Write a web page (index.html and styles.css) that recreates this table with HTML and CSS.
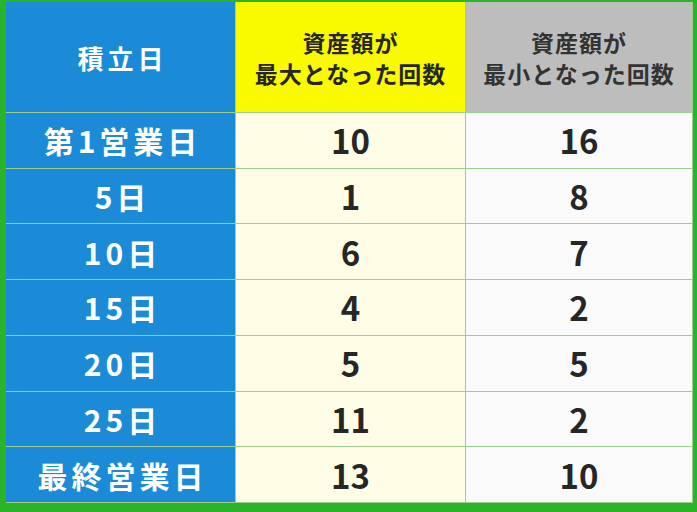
FILE: index.html
```html
<!DOCTYPE html>
<html lang="ja">
<head>
<meta charset="utf-8">
<link rel="stylesheet" href="styles.css">
</head>
<body>
<div class="frame">
  <div class="table">
    <div class="cell head label">積立日</div>
    <div class="cell head max"><span class="line">資産額が</span><span class="line">最大となった回数</span></div>
    <div class="cell head min"><span class="line">資産額が</span><span class="line">最小となった回数</span></div>

    <div class="cell label">第1営業日</div><div class="cell num max">10</div><div class="cell num min">16</div>
    <div class="cell label">5日</div><div class="cell num max">1</div><div class="cell num min">8</div>
    <div class="cell label">10日</div><div class="cell num max">6</div><div class="cell num min">7</div>
    <div class="cell label">15日</div><div class="cell num max">4</div><div class="cell num min">2</div>
    <div class="cell label">20日</div><div class="cell num max">5</div><div class="cell num min">5</div>
    <div class="cell label">25日</div><div class="cell num max">11</div><div class="cell num min">2</div>
    <div class="cell label">最終営業日</div><div class="cell num max">13</div><div class="cell num min">10</div>
  </div>
</div>
</body>
</html>
```

FILE: styles.css
```css
* { box-sizing: border-box; }
html, body { margin: 0; padding: 0; }
body {
  width: 697px;
  height: 512px;
  background: #2bb32a;
  font-family: "Noto Sans CJK JP", "Noto Sans", sans-serif;
  overflow: hidden;
}
.frame {
  padding: 2px 4px 9px 6px;
}
.table {
  display: grid;
  grid-template-columns: 229px 229px 1fr;
  grid-template-rows: 110px repeat(7, 1fr);
  gap: 1px;
  height: 501px;
  background: #9ccf8e;
  border-bottom: 1px solid #9ccf8e;
  border-right: 1px solid #9ccf8e;
}
.cell {
  display: flex;
  align-items: center;
  justify-content: center;
  text-align: center;
  font-weight: 700;
}
.label {
  background: #1b8bd8;
  color: #ffffff;
  font-size: 30px;
  letter-spacing: 4px;
  padding-left: 4px;
}
.head.label {
  font-size: 26px;
  letter-spacing: 4px;
}
.head.max, .head.min {
  flex-direction: column;
  font-size: 23px;
  letter-spacing: 1px;
  color: #262626;
  padding-top: 2px;
}
.line {
  display: block;
  line-height: 31px;
  height: 31px;
}
.head.max { background: #f9f900; }
.head.min { background: #bdbdbd; color: #333333; }
.num {
  font-size: 33px;
  color: #262626;
}
.num.max { background: #fffde6; }
.num.min { background: #fafafa; }
```
